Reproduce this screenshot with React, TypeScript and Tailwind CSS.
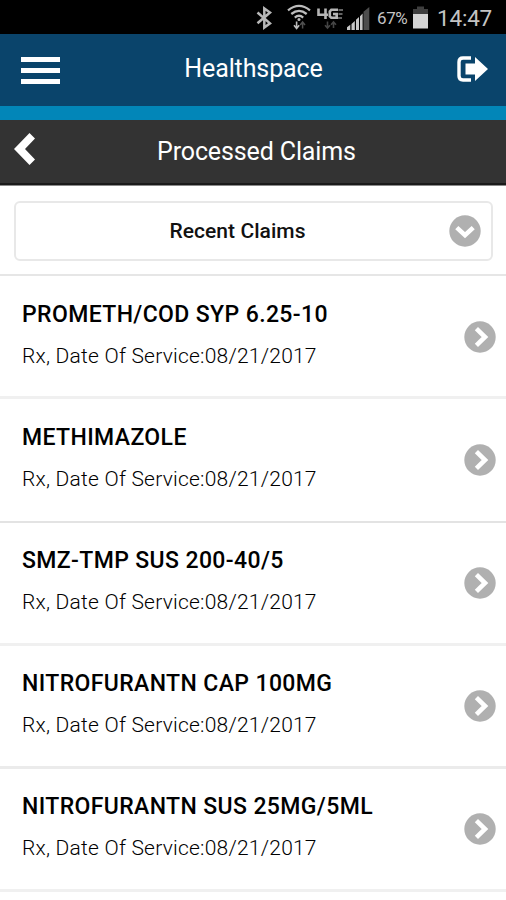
import React from "react";

const claims = [
  { name: "PROMETH/COD SYP 6.25-10", date: "08/21/2017", row: "h-[123px] border-b-[3px] border-[#f0f0f0] pb-0" },
  { name: "METHIMAZOLE", date: "08/21/2017", row: "h-[124px] border-b-2 border-[#e3e3e3] pb-[2px]" },
  { name: "SMZ-TMP SUS 200-40/5", date: "08/21/2017", row: "h-[123px] border-b-[3px] border-[#f0f0f0] pb-[2px]" },
  { name: "NITROFURANTN CAP 100MG", date: "08/21/2017", row: "h-[123px] border-b-[3px] border-[#ebebeb] pb-[2px]" },
  { name: "NITROFURANTN SUS 25MG/5ML", date: "08/21/2017", row: "h-[123px] border-b-[3px] border-[#f0f0f0] pb-[2px]" },
];

function CircleChevron({ down = false }: { down?: boolean }) {
  return (
    <svg width="32" height="32" viewBox="0 0 32 32" className="shrink-0">
      <circle cx="16" cy="16" r="15.7" fill="#b0b0b0" />
      <path
        d={down ? "M7.8 12.6 16 20.2 24.2 12.6" : "M12.4 7.7 21 16 12.4 24.3"}
        fill="none"
        stroke="#fff"
        strokeWidth="4.6"
      />
    </svg>
  );
}

function StatusBar() {
  return (
    <div className="flex h-[34px] items-center justify-end bg-black pr-[13px] text-[#c4c4c4]">
      <svg width="122" height="34" viewBox="250 0 122 34" className="mr-[5px] shrink-0" fill="none">
        <path d="M257.5 12.5 270 23.3 264.3 27.5V8.5L270 12.5 257.5 23.3" stroke="#b8b8b8" strokeWidth="2.5" />
        <g stroke="#bdbdbd" strokeWidth="2.3">
          <path d="M288 10.3Q299 1.5 310 10.3" />
          <path d="M291.3 14Q299 7.8 306.7 14" />
          <path d="M294.8 17.6Q299 14 303.2 17.6" />
        </g>
        <circle cx="299" cy="19.4" r="1.5" fill="#bdbdbd" />
        <path d="M296.6 21.5V28M294 25.3 296.6 28.4 299.2 25.3" stroke="#bdbdbd" strokeWidth="1.6" />
        <path d="M302.6 28.5V22.5M300.2 25 302.6 22 305 25" stroke="#505050" strokeWidth="1.5" />
        <path d="M318.5 8.5V14.8H328M325.5 8.5V19" stroke="#b5b5b5" strokeWidth="2.6" />
        <path d="M338 9.8H331.3L329.8 11.5V16.2L331.3 17.8H336.7V14H333" stroke="#b5b5b5" strokeWidth="2.6" />
        <path d="M338.5 10H343M338.5 14H342.5M338 18H342" stroke="#858585" strokeWidth="1.5" />
        <path d="M327.5 21.5V28M325 25.3 327.5 28 330 25.3M333.5 28V22M331 24.7 333.5 22 336 24.7" stroke="#454545" strokeWidth="1.6" />
        <path d="M363.5 11.8 369.3 7V30H363.5Z" fill="#4d4d4d" />
        <path d="M347 27.2 350.3 24.8V30H347ZM351.5 24 354.8 21V30H351.5ZM356 19.8 359 17V30H356ZM360 16.2 362.6 13.4V30H360Z" fill="#c8c8c8" />
      </svg>
      <span className="mt-[3px] w-[32px] whitespace-nowrap text-[17px] leading-none tracking-[-0.4px]">67%</span>
      <svg width="15" height="34" viewBox="413 0 15 34" className="ml-[4px] shrink-0">
        <path d="M413 9H417V6.5H424V9H428V15H413Z" fill="#3e3e3e" />
        <path d="M413 14H428V28.5H413Z" fill="#d4d4d4" />
      </svg>
      <span className="ml-[9px] mt-[3px] w-[56px] whitespace-nowrap text-[22.5px] leading-none tracking-[-0.2px]">14:47</span>
    </div>
  );
}

export default function App() {
  return (
    <div className="h-[900px] w-[506px] overflow-hidden bg-white font-['Roboto',sans-serif]">
      <StatusBar />
      <header className="flex h-[72px] items-center justify-between bg-[#0a446b] pl-[21px] pr-[18px] text-white">
        <button className="flex w-[39px] flex-col gap-[6px]" aria-label="Menu">
          <span className="h-[5px] w-full bg-white" />
          <span className="h-[5px] w-full bg-white" />
          <span className="h-[5px] w-full bg-white" />
        </button>
        <h1 className="ml-[-10px] mt-[-2px] whitespace-nowrap text-[25px] leading-8 tracking-[-0.1px]">Healthspace</h1>
        <button aria-label="Log out" className="mt-[-2px]">
          <svg width="31" height="26" viewBox="0 0 31 26">
            <path d="M14 2H6Q2 2 2 6V20Q2 24 6 24H14" fill="none" stroke="#fff" strokeWidth="3.4" />
            <path d="M8.5 7.5H18V1L31 13 18 25V18.5H8.5Z" fill="#fff" />
          </svg>
        </button>
      </header>
      <div className="h-[14px] bg-[#0286b8]" />
      <div className="flex h-[65px] items-center border-b-2 border-[#1a1a1a] bg-[#333] text-white">
        <button aria-label="Back" className="ml-[14px] w-[22px]">
          <svg width="22" height="32" viewBox="0 0 22 32" className="mt-[-5px]">
            <path d="M0 16 15.5 0 21 5.5 11 16 21 26.5 15.5 32Z" fill="#fff" />
          </svg>
        </button>
        <h2 className="ml-[121px] mt-px whitespace-nowrap text-[25px] leading-8 tracking-[-0.12px]">Processed Claims</h2>
      </div>
      <div className="h-[91px] border-b-2 border-t border-b-[#e6e6e6] border-t-[#8a8a8a] px-[14px] pt-[15px]">
        <button className="flex h-[60px] w-[479px] items-center rounded-[6px] border-2 border-[#e8e8e8] pr-[10px] text-[#111]">
          <span className="grow pl-[10px] text-center text-[21px] font-medium leading-7 tracking-[0.05px]">Recent Claims</span>
          <CircleChevron down />
        </button>
      </div>
      <ul>
        {claims.map((claim) => (
          <li key={claim.name} className={`flex items-center justify-between pl-[22px] pr-[10px] ${claim.row}`}>
            <div className="mt-[-1px] whitespace-nowrap">
              <div className="text-[23px] font-medium leading-8 tracking-[0.38px] text-black">{claim.name}</div>
              <div className="mt-[9px] text-[21px] font-light leading-8 tracking-[0.22px] text-black">Rx, Date Of Service:{claim.date}</div>
            </div>
            <div className="mt-px">
              <CircleChevron />
            </div>
          </li>
        ))}
      </ul>
    </div>
  );
}
